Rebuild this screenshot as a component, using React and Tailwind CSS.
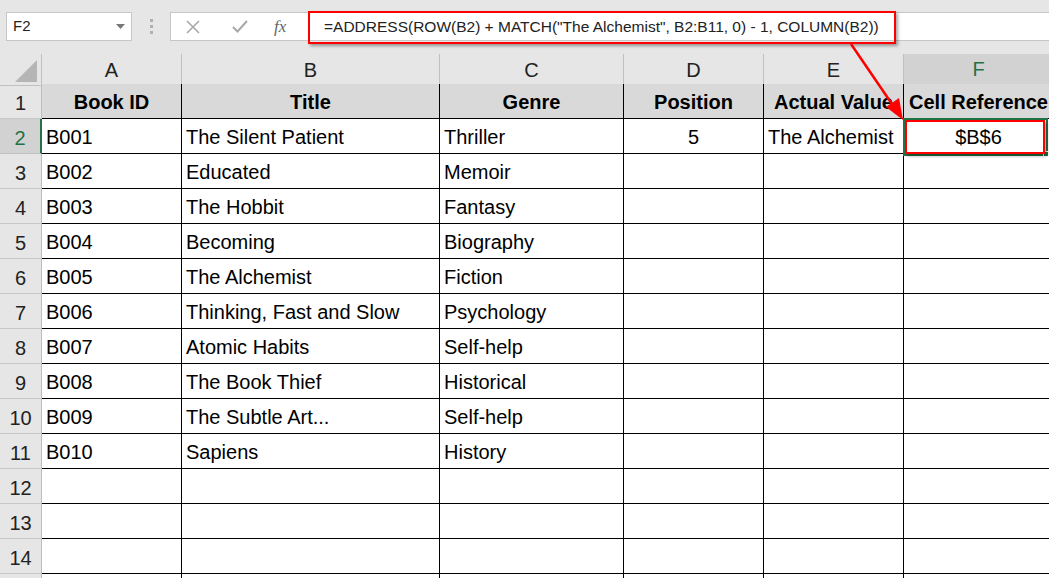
import React from 'react';

const cols = ['A', 'B', 'C', 'D', 'E', 'F'];
const headers = ['Book ID', 'Title', 'Genre', 'Position', 'Actual Value', 'Cell Reference'];
const books = [
  ['B001', 'The Silent Patient', 'Thriller'],
  ['B002', 'Educated', 'Memoir'],
  ['B003', 'The Hobbit', 'Fantasy'],
  ['B004', 'Becoming', 'Biography'],
  ['B005', 'The Alchemist', 'Fiction'],
  ['B006', 'Thinking, Fast and Slow', 'Psychology'],
  ['B007', 'Atomic Habits', 'Self-help'],
  ['B008', 'The Book Thief', 'Historical'],
  ['B009', 'The Subtle Art...', 'Self-help'],
  ['B010', 'Sapiens', 'History'],
  ['', '', ''],
  ['', '', ''],
  ['', '', ''],
];

const gridCols = 'grid grid-cols-[42px_140px_258px_184px_140px_140px_150px]';

const FormulaBar = () => (
  <div className="relative h-[52px] bg-[#e6e6e6] flex items-start pt-[12px]">
    <div className="ml-[6px] w-[126px] h-[29px] bg-white border border-[#c6c6c6] flex items-center justify-between px-[6px] text-[15px] text-[#222]">
      <span>F2</span>
      <svg width="9" height="5" viewBox="0 0 9 5"><path d="M0 0h9L4.5 5z" fill="#777" /></svg>
    </div>
    <div className="w-[38px] h-[29px] flex flex-col items-center justify-center gap-[3px]">
      <span className="w-[3px] h-[3px] bg-[#b0b0b0]" />
      <span className="w-[3px] h-[3px] bg-[#b0b0b0]" />
      <span className="w-[3px] h-[3px] bg-[#b0b0b0]" />
    </div>
    <div className="flex-1 h-[29px] bg-white border border-[#c6c6c6] border-r-0 flex items-center">
      <div className="w-[137px] flex items-center h-full">
        <svg className="ml-[15px]" width="14" height="14" viewBox="0 0 14 14">
          <path d="M1 1L13 13M13 1L1 13" stroke="#a8a8a8" strokeWidth="1.6" />
        </svg>
        <svg className="ml-[32px]" width="16" height="13" viewBox="0 0 16 13">
          <path d="M1 7L5.5 11.5L15 1" stroke="#a8a8a8" strokeWidth="2" fill="none" />
        </svg>
        <span className="ml-[26px] text-[17px] italic text-[#666] font-['Liberation_Serif',serif]">fx</span>
      </div>
      <span className="ml-[16px] text-[15.5px] text-[#222] font-['Liberation_Sans',sans-serif] whitespace-nowrap">
        =ADDRESS(ROW(B2) + MATCH("The Alchemist", B2:B11, 0) - 1, COLUMN(B2))
      </span>
    </div>
    <div className="absolute left-[308px] top-[11px] w-[588px] h-[33px] border-[2.5px] border-[#ff0000] shadow-[2px_2px_3px_rgba(0,0,0,0.35)] pointer-events-none" />
  </div>
);

const ColumnHeaders = () => (
  <div className={`${gridCols} h-[32px] bg-[#e6e6e6] pt-[2px]`}>
    <div className="relative border-r border-b border-[#c0c0c0] bg-[#e6e6e6]">
      <svg className="absolute right-[4px] bottom-[3px]" width="22" height="22" viewBox="0 0 22 22">
        <path d="M22 0V22H0z" fill="#b5b5b5" />
      </svg>
    </div>
    {cols.map((c) =>
      c === 'F' ? (
        <div key={c} className="flex items-center justify-center bg-[#d2d2d2] text-[#217346] border-b-2 border-[#217346] border-r border-r-[#c0c0c0]">
          {c}
        </div>
      ) : (
        <div key={c} className="flex items-center justify-center border-r border-b border-[#c0c0c0] text-[#222]">
          {c}
        </div>
      )
    )}
  </div>
);

const RowHeader = ({ n, selected }) => (
  <div
    className={`flex items-center justify-center border-b pt-[3px] ${
      selected
        ? 'bg-[#d2d2d2] text-[#217346] border-b-[#c0c0c0] border-r-2 border-r-[#217346]'
        : 'bg-[#e6e6e6] text-[#222] border-b-[#c8c8c8] border-r border-r-[#bdbdbd]'
    }`}
  >
    {n}
  </div>
);

const Cell = ({ children, bold, center, fill }) => (
  <div
    className={`flex items-center border-r border-b border-black px-[4px] pt-[2px] whitespace-nowrap overflow-hidden ${
      center ? 'justify-center' : ''
    } ${bold ? 'font-bold' : ''} ${fill ? 'bg-[#d9d9d9]' : 'bg-white'}`}
  >
    {children}
  </div>
);

export default function App() {
  return (
    <div className="relative w-[1049px] h-[578px] overflow-hidden bg-white font-['Liberation_Sans',sans-serif] text-[20px] text-black">
      <FormulaBar />
      <ColumnHeaders />
      <div className={`${gridCols} auto-rows-[35px]`}>
        <RowHeader n={1} />
        {headers.map((h) => (
          <Cell key={h} bold center fill>
            {h}
          </Cell>
        ))}
        {books.map((b, i) => {
          const row = i + 2;
          return (
            <React.Fragment key={row}>
              <RowHeader n={row} selected={row === 2} />
              <Cell>{b[0]}</Cell>
              <Cell>{b[1]}</Cell>
              <Cell>{b[2]}</Cell>
              <Cell center>{row === 2 ? '5' : ''}</Cell>
              <Cell>{row === 2 ? 'The Alchemist' : ''}</Cell>
              <Cell center>{row === 2 ? '$B$6' : ''}</Cell>
            </React.Fragment>
          );
        })}
        {/* row 15, only its top edge shows */}
        <RowHeader n="" />
        <Cell />
        <Cell />
        <Cell />
        <Cell />
        <Cell />
        <Cell />
      </div>

      {/* selection + highlight on F2 */}
      <div className="absolute left-[903px] top-[118px] w-[145px] h-[38px] border-2 border-[#217346] pointer-events-none" />
      <div className="absolute left-[1043px] top-[151px] w-[6px] h-[6px] bg-[#217346] border border-white pointer-events-none" />
      <div className="absolute left-[905px] top-[120px] w-[140px] h-[34px] border-[2.5px] border-[#ff0000] shadow-[2px_2px_3px_rgba(0,0,0,0.35)] pointer-events-none" />

      {/* arrow */}
      <svg className="absolute left-0 top-0 pointer-events-none" width="1049" height="578">
        <line x1="851" y1="44" x2="894" y2="107" stroke="#ff0000" strokeWidth="2.5" />
        <path d="M903 120L886 107L899 98z" fill="#ff0000" />
      </svg>
    </div>
  );
}
